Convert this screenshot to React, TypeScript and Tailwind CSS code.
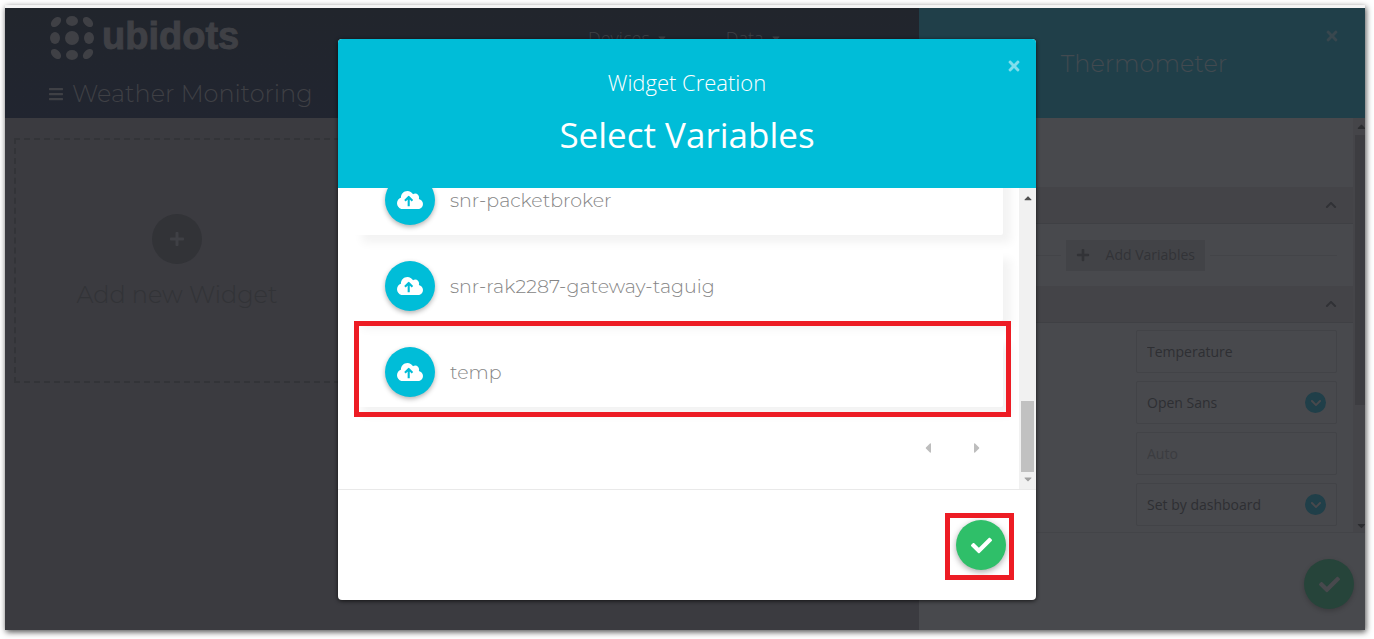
import React from "react";
import {
  FaBars,
  FaCaretDown,
  FaCaretLeft,
  FaCaretRight,
  FaCaretUp,
  FaCheck,
  FaChevronDown,
  FaChevronUp,
  FaPlus,
  FaTimes,
} from "react-icons/fa";

const variables = ["snr-packetbroker", "snr-rak2287-gateway-taguig", "temp"];

function LogoMark() {
  return (
    <svg viewBox="0 0 44 44" className="size-11 shrink-0" fill="currentColor" aria-hidden="true">
      <circle cx="22" cy="22" r="7" />
      <ellipse cx="22" cy="5" rx="6" ry="5" />
      <ellipse cx="22" cy="39" rx="6" ry="5" />
      <ellipse cx="5" cy="22" rx="5" ry="6" />
      <ellipse cx="39" cy="22" rx="5" ry="6" />
      <ellipse cx="6" cy="6" rx="6" ry="4" transform="rotate(-45 6 6)" />
      <ellipse cx="38" cy="6" rx="6" ry="4" transform="rotate(45 38 6)" />
      <ellipse cx="6" cy="38" rx="6" ry="4" transform="rotate(45 6 38)" />
      <ellipse cx="38" cy="38" rx="6" ry="4" transform="rotate(-45 38 38)" />
    </svg>
  );
}

function CloudUpload() {
  return (
    <svg viewBox="0 32 640 448" className="w-[26px]" aria-hidden="true">
      <path
        fill="#fff"
        d="M537.6 226.6c4.1-10.7 6.4-22.4 6.4-34.6 0-53-43-96-96-96-19.7 0-38.1 6-53.3 16.2C367 64.2 315.3 32 256 32c-88.4 0-160 71.6-160 160 0 2.7.1 5.4.2 8.1C40.2 219.8 0 273.2 0 336c0 79.5 64.5 144 144 144h368c70.7 0 128-57.3 128-128 0-61.9-44-113.6-102.4-125.4z"
      />
      <path
        d="M288 405V185M196 270l92-92 92 92"
        fill="none"
        stroke="#00bdd8"
        strokeWidth="52"
        strokeLinejoin="round"
      />
    </svg>
  );
}

function Highlight({ className }: { className: string }) {
  return <span aria-hidden="true" className={`pointer-events-none absolute z-10 border-5 border-[#ed1c24] ${className}`} />;
}

function VariableRow({ name, highlighted }: { name: string; highlighted: boolean }) {
  return (
    <li className="relative shrink-0">
      <button
        type="button"
        className="flex h-[70px] w-full items-center gap-[15px] rounded-xs bg-white pl-[31px] text-left shadow-[8px_8px_10px_rgba(0,0,0,0.05)]"
      >
        <span className="flex size-[50px] items-center justify-center rounded-full bg-[#00bdd8] shadow-[0_2px_5px_rgba(0,0,0,0.3)]">
          <CloudUpload />
        </span>
        <span className="pt-[2px] font-['Montserrat','Inter',sans-serif] text-[19px] font-light text-[#858585]">
          {name}
        </span>
      </button>
      {highlighted && <Highlight className="-top-4 -right-2 -bottom-[10px] left-0" />}
    </li>
  );
}

function Accordion({ label }: { label: string }) {
  return (
    <button
      type="button"
      aria-label={label}
      className="flex h-[37px] w-full shrink-0 items-center justify-end border-b border-[#3f4044] bg-[#444448] pr-4 text-[#303135]"
    >
      <FaChevronUp size={12} />
    </button>
  );
}

function SelectField({ label, value }: { label: string; value: string }) {
  return (
    <div className="relative flex items-center">
      <select
        aria-label={label}
        defaultValue={value}
        className="h-[43px] w-full appearance-none rounded-xs border border-[#424347] bg-transparent px-[10px] text-sm text-[#2e2f33]"
      >
        <option>{value}</option>
      </select>
      <span className="pointer-events-none absolute right-[11px] flex size-[21px] items-center justify-center rounded-full bg-[#203f49] text-[#48494d]">
        <FaChevronDown size={12} />
      </span>
    </div>
  );
}

function Dashboard() {
  return (
    <div className="flex min-w-0 flex-1 flex-col bg-[#3b3b40]">
      <header className="h-[110px] bg-linear-to-b from-[#21252c] to-[#212530] text-[#3f4045]">
        <div className="flex h-[60px] items-center pl-[45px]">
          <div className="flex w-[538px] shrink-0 items-center gap-2">
            <LogoMark />
            <span className="pb-1 font-['Liberation_Sans',sans-serif] text-[38px] leading-10 font-bold [-webkit-text-stroke:1px_currentColor]">
              ubidots
            </span>
          </div>
          <nav className="flex gap-[58px] text-lg font-light">
            <button type="button" className="flex items-center gap-[6px]">
              Devices <FaCaretDown size={12} />
            </button>
            <button type="button" className="flex items-center gap-[6px]">
              Data <FaCaretDown size={12} />
            </button>
          </nav>
        </div>
        <div className="flex h-[50px] items-center gap-2 pt-[2px] pl-[43px]">
          <button type="button" aria-label="Dashboards">
            <FaBars size={16} />
          </button>
          <h1 className="font-['Montserrat','Inter',sans-serif] text-2xl font-light">Weather Monitoring</h1>
        </div>
      </header>
      <main className="px-[9px] pt-5">
        <button
          type="button"
          className="flex h-[245px] w-[326px] flex-col items-center justify-center gap-[15px] border-2 border-dashed border-[#333438] pt-1 text-[#323337]"
        >
          <span className="flex size-[50px] items-center justify-center rounded-full bg-[#323337] text-[#3f4045]">
            <FaPlus size={16} />
          </span>
          <span className="font-['Montserrat','Inter',sans-serif] text-2xl font-light">Add new Widget</span>
        </button>
      </main>
    </div>
  );
}

function SettingsPanel() {
  return (
    <aside className="flex w-[446px] shrink-0 flex-col bg-[#48494d]">
      <header className="relative flex h-[110px] items-center justify-center bg-[#203f49] pt-[2px] pl-1 text-[#424a50]">
        <h2 className="font-['Montserrat','Inter',sans-serif] text-2xl font-light">Thermometer</h2>
        <button type="button" aria-label="Close settings" className="absolute top-5 right-[25px] text-[#38474e]">
          <FaTimes size={16} />
        </button>
      </header>
      <div className="flex border-b border-[#434448]">
        <div className="flex min-w-0 flex-1 flex-col pt-[69px] pb-[6px]">
          <Accordion label="Data" />
          <div className="flex h-[62px] items-center gap-[5px] px-4">
            <span className="h-px flex-1 bg-[#434448]" />
            <button
              type="button"
              className="flex h-[31px] items-center gap-4 bg-[#424347] px-[10px] text-sm text-[#323337]"
            >
              <FaPlus size={14} /> Add Variables
            </button>
            <span className="h-px w-[127px] bg-[#434448]" />
          </div>
          <Accordion label="Appearance" />
          <div className="mt-[7px] mr-4 flex w-[201px] flex-col gap-2 self-end">
            <input
              aria-label="Name"
              defaultValue="Temperature"
              className="h-[43px] w-full rounded-xs border border-[#424347] bg-transparent px-[10px] text-sm text-[#2e2f33]"
            />
            <SelectField label="Font family" value="Open Sans" />
            <input
              aria-label="Font size"
              placeholder="Auto"
              className="h-[43px] w-full rounded-xs border border-[#424347] bg-transparent px-[10px] text-sm placeholder:text-[#3b3c40]"
            />
            <SelectField label="Color" value="Set by dashboard" />
          </div>
        </div>
        <div className="flex w-3 flex-col overflow-hidden bg-[#454549] pl-[2px] text-[#2c2d30]">
          <FaCaretUp size={13} className="my-[2px] shrink-0" />
          <div className="h-[270px] bg-[#3d3d41]" />
          <FaCaretDown size={13} className="mt-auto shrink-0" />
        </div>
      </div>
      <div className="flex justify-end pt-[26px] pr-[11px]">
        <button
          type="button"
          aria-label="Save widget"
          className="flex size-[50px] items-center justify-center rounded-full bg-[#26443a] text-[#48494d] shadow-[0_2px_5px_rgba(0,0,0,0.2)]"
        >
          <FaCheck size={21} />
        </button>
      </div>
    </aside>
  );
}

function VariablesDialog() {
  return (
    <section
      role="dialog"
      aria-labelledby="dialog-title"
      className="w-full max-w-[698px] overflow-hidden rounded-sm bg-white shadow-[0_1px_4px_rgba(0,0,0,0.7)]"
    >
      <header className="relative flex h-[149px] flex-col items-center bg-[#00bdd8] pt-[27px] text-white">
        <p className="text-[22px] leading-8 font-light">Widget Creation</p>
        <h2 id="dialog-title" className="mt-[13px] text-[35px] leading-12">
          Select Variables
        </h2>
        <button type="button" aria-label="Close" className="absolute top-[19px] right-[14px] text-white/50">
          <FaTimes size={16} />
        </button>
      </header>
      <div className="flex h-[302px] border-b border-[#e9e9e9]">
        <div className="flex min-w-0 flex-1 flex-col justify-end overflow-hidden px-4">
          <ul className="flex flex-col gap-4">
            {variables.map((name) => (
              <VariableRow key={name} name={name} highlighted={name === "temp"} />
            ))}
          </ul>
          <div className="flex h-[82px] shrink-0 items-center justify-end gap-[33px] pr-[18px] text-[#bdbdbd]">
            <button type="button" aria-label="Previous page">
              <FaCaretLeft size={16} />
            </button>
            <button type="button" aria-label="Next page">
              <FaCaretRight size={16} />
            </button>
          </div>
        </div>
        <div className="flex w-[17px] flex-col items-center bg-[#f1f1f1]">
          <FaCaretUp size={12} className="mt-1 text-[#505050]" />
          <div className="mt-auto h-[71px] w-[13px] bg-[#c1c1c1]" />
          <FaCaretDown size={12} className="mt-[1px] mb-1 text-[#a3a3a3]" />
        </div>
      </div>
      <footer className="flex h-[110px] items-center justify-end pr-[30px]">
        <div className="relative">
          <button
            type="button"
            aria-label="Confirm"
            className="flex size-[50px] items-center justify-center rounded-full bg-[#2fbf69] text-white shadow-[0_2px_6px_rgba(0,0,0,0.35)]"
          >
            <FaCheck size={21} />
          </button>
          <Highlight className="-top-[7px] -right-2 -bottom-[10px] -left-[11px]" />
        </div>
      </footer>
    </section>
  );
}

export default function App() {
  return (
    <div className="relative flex min-h-screen bg-white pt-[5px] pr-[9px] pb-[9px] pl-[5px] font-['Open_Sans',sans-serif]">
      <div className="flex min-w-0 flex-1 border-t-3 border-[#f4f4f4] shadow-[1px_2px_6px_rgba(0,0,0,0.7)]">
        <Dashboard />
        <SettingsPanel />
      </div>
      <div className="absolute inset-0 flex items-center justify-center">
        <VariablesDialog />
      </div>
    </div>
  );
}
